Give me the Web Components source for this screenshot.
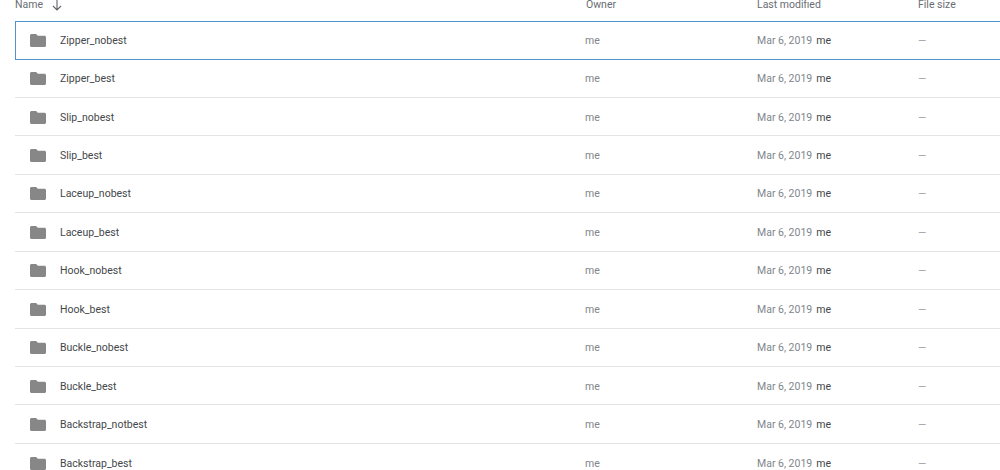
<!DOCTYPE html>
<html>
<head>
<meta charset="utf-8">
<title>Drive folder list</title>
<style>
  html, body { margin: 0; height: 470px; overflow: hidden; background: #fff; }
  body { font-family: Roboto, "Liberation Sans", sans-serif; }
</style>
</head>
<body>
<drive-list>
  <drive-header></drive-header>
  <drive-row name="Zipper_nobest" selected></drive-row>
  <drive-row name="Zipper_best"></drive-row>
  <drive-row name="Slip_nobest"></drive-row>
  <drive-row name="Slip_best"></drive-row>
  <drive-row name="Laceup_nobest"></drive-row>
  <drive-row name="Laceup_best"></drive-row>
  <drive-row name="Hook_nobest"></drive-row>
  <drive-row name="Hook_best"></drive-row>
  <drive-row name="Buckle_nobest"></drive-row>
  <drive-row name="Buckle_best"></drive-row>
  <drive-row name="Backstrap_notbest"></drive-row>
  <drive-row name="Backstrap_best"></drive-row>
</drive-list>
<script>
"use strict";
const COLUMNS = 'grid-template-columns: 571px 171px 161px 1fr;';

class DriveList extends HTMLElement {
  constructor() {
    super();
    this.attachShadow({ mode: 'open' });
    this.shadowRoot.innerHTML = `
      <style>
        :host { display: flex; flex-direction: column; padding-left: 15px; }
      </style>
      <slot></slot>`;
  }
}

class DriveHeader extends HTMLElement {
  constructor() {
    super();
    this.attachShadow({ mode: 'open' });
    this.shadowRoot.innerHTML = `
      <style>
        :host {
          display: grid;
          ${COLUMNS}
          align-items: center;
          height: 21px;
          margin: -6px 0 6px;
          font-size: 10.5px;
          color: #696d71;
        }
        .name { display: flex; align-items: center; gap: 8px; }
        svg { width: 12px; height: 12px; }
      </style>
      <div class="name">
        <span>Name</span>
        <svg viewBox="0 0 12 12" fill="none" stroke="#5f6368" stroke-width="1.1">
          <path d="M6 1v10M2 7l4 4 4-4"/>
        </svg>
      </div>
      <div>Owner</div>
      <div>Last modified</div>
      <div>File size</div>`;
  }
}

class DriveRow extends HTMLElement {
  constructor() {
    super();
    this.attachShadow({ mode: 'open' });
    this.shadowRoot.innerHTML = `
      <style>
        :host {
          display: grid;
          ${COLUMNS}
          align-items: center;
          box-sizing: border-box;
          height: 38.45px;
          padding-top: 1px;
          flex: none;
          font-size: 10.5px;
          color: #80868b;
          border-bottom: 1px solid #e3e4e6;
        }
        :host([selected]) {
          grid-template-columns: 570px 171px 161px 1fr;
          height: 39px;
          margin-bottom: -0.55px;
          padding-top: 0;
          border: solid #4f93cc;
          border-width: 1px 0 1px 1px;
        }
        .name { display: flex; align-items: center; padding-left: 15px; color: #44474a; }
        :host([selected]) .name { padding-left: 14px; }
        svg { width: 16px; height: 13px; margin-right: 14px; flex: none; }
        .owner { margin-left: -1px; }
        .modified { display: flex; gap: 4px; }
        .by { color: #44474a; }
        .size { color: #9aa0a6; }
      </style>
      <div class="name">
        <svg viewBox="0 0 16 13"><path fill="#878787" d="M1.5 0h4.700l1.600 1.700h6.700c.8 0 1.500.7 1.500 1.500v8.300c0 .8-.7 1.500-1.500 1.500H1.500C.7 13 0 12.300 0 11.500V1.500C0 .7.7 0 1.500 0z"/></svg>
        <span id="name"></span>
      </div>
      <div class="owner">me</div>
      <div class="modified"><span>Mar 6, 2019</span><span class="by">me</span></div>
      <div class="size">—</div>`;
  }
  connectedCallback() {
    this.shadowRoot.getElementById('name').textContent = this.getAttribute('name');
  }
}

customElements.define('drive-list', DriveList);
customElements.define('drive-header', DriveHeader);
customElements.define('drive-row', DriveRow);
</script>
</body>
</html>
